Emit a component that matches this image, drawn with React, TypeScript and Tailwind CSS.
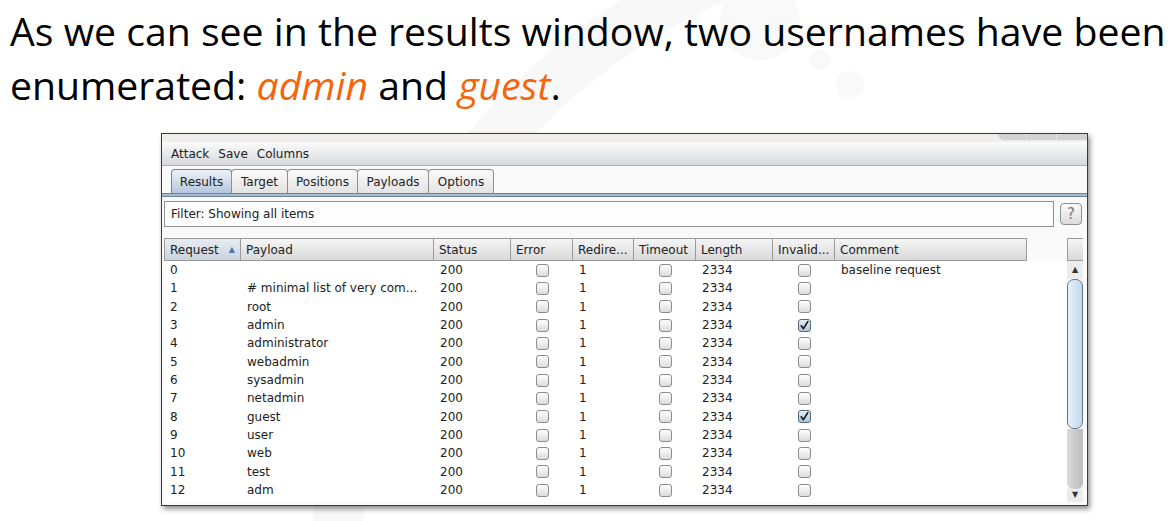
import React from "react";

type Col = { name: string; w: string; kind: "text" | "check" };

const cols: Col[] = [
  { name: "Request", w: "w-[77px]", kind: "text" },
  { name: "Payload", w: "w-[193px]", kind: "text" },
  { name: "Status", w: "w-[77px]", kind: "text" },
  { name: "Error", w: "w-[62px]", kind: "check" },
  { name: "Redire...", w: "w-[61px]", kind: "text" },
  { name: "Timeout", w: "w-[62px]", kind: "check" },
  { name: "Length", w: "w-[77px]", kind: "text" },
  { name: "Invalid...", w: "w-[62px]", kind: "check" },
  { name: "Comment", w: "w-[192px]", kind: "text" },
];

const payloads = [
  "",
  "# minimal list of very com...",
  "root",
  "admin",
  "administrator",
  "webadmin",
  "sysadmin",
  "netadmin",
  "guest",
  "user",
  "web",
  "test",
  "adm",
];

function Check({ on }: { on?: boolean }) {
  if (on) {
    return (
      <span className="relative inline-block w-[13px] h-[13px] rounded-[3px] border border-[#55677d] bg-linear-to-b from-[#e4ecf5] to-[#afc3d9]">
        <svg viewBox="0 0 13 13" className="absolute -left-[1px] -top-[1px] w-[13px] h-[13px]">
          <path d="M3.2 6.8 L5.4 9.6 L9.8 2.6" fill="none" stroke="#1a1a1a" strokeWidth="1.7" strokeLinecap="round" strokeLinejoin="round" />
        </svg>
      </span>
    );
  }
  return (
    <span className="inline-block w-[13px] h-[13px] rounded-[3px] border border-[#8c8c8c] bg-linear-to-b from-white to-[#dcdcdc]" />
  );
}

function Row({ i }: { i: number }) {
  const checked = i === 3 || i === 8;
  const values = [
    String(i),
    payloads[i],
    "200",
    "",
    "1",
    "",
    "2334",
    "",
    i === 0 ? "baseline request" : "",
  ];
  return (
    <div className="flex h-[18.33px] shrink-0">
      {cols.map((c, k) =>
        c.kind === "check" ? (
          <div key={k} className={`${c.w} shrink-0 flex items-center justify-center`}>
            <Check on={k === 7 && checked} />
          </div>
        ) : (
          <div key={k} className={`${c.w} shrink-0 flex items-center pl-[6px] whitespace-nowrap overflow-hidden`}>
            {values[k]}
          </div>
        )
      )}
    </div>
  );
}

function PartialRow() {
  return (
    <div className="flex h-[18.33px] shrink-0">
      {cols.map((c, k) =>
        c.kind === "check" ? (
          <div key={k} className={`${c.w} shrink-0 flex items-center justify-center`}>
            <Check />
          </div>
        ) : (
          <div key={k} className={`${c.w} shrink-0`} />
        )
      )}
    </div>
  );
}

const tabs = [
  { name: "Results", w: "w-[61px]", sel: true },
  { name: "Target", w: "w-[57px]", sel: false },
  { name: "Positions", w: "w-[71px]", sel: false },
  { name: "Payloads", w: "w-[72px]", sel: false },
  { name: "Options", w: "w-[66px]", sel: false },
];

export default function App() {
  return (
    <div className="relative w-[1173px] h-[521px] bg-white overflow-hidden">
      <svg className="absolute left-0 top-0 w-[1173px] h-[521px] pointer-events-none" viewBox="0 0 1173 521">
        <circle cx="974" cy="560" r="637" fill="none" stroke="#f8f8f8" strokeWidth="50" />
        <circle cx="760" cy="20" r="40" fill="#f9f9f9" />
        <circle cx="820" cy="60" r="10" fill="#f9f9f9" />
        <circle cx="850" cy="85" r="14" fill="#f9f9f9" />
      </svg>

      <div className="relative">
        <div
          className="pl-[10px] pt-[4px] text-[39.2px] leading-[54px] text-black whitespace-nowrap"
          style={{ fontFamily: '"Open Sans", sans-serif' }}
        >
          <div>As we can see in the results window, two usernames have been</div>
          <div>
            enumerated: <span className="italic text-[#f5650c]">admin</span> and{" "}
            <span className="italic text-[#f5650c]">guest</span>.
          </div>
        </div>

        <div
          className="ml-[161px] mt-[21px] w-[927px] h-[373px] border border-[#3a3a3a] shadow-[2px_3px_5px_rgba(0,0,0,0.45)] bg-[#fafafa] flex flex-col overflow-hidden text-[12px] text-[#222]"
          style={{ fontFamily: '"DejaVu Sans", sans-serif' }}
        >
          {/* top strip */}
          <div className="h-[8px] bg-[#efeeec] flex justify-end shrink-0">
            <div className="flex h-[6px] rounded-bl-[6px] overflow-hidden bg-[#d2d2d2]">
              <div className="w-[29px] border-r border-[#e4e4e4]" />
              <div className="w-[30px] border-r border-[#e4e4e4]" />
              <div className="w-[30px]" />
            </div>
          </div>
          {/* menu bar */}
          <div className="h-[24px] shrink-0 flex items-center gap-[9px] pl-[9px] bg-linear-to-b from-[#fbfbfb] to-[#d6d9dd] border-b border-[#aeb3ba]">
            <span>Attack</span>
            <span>Save</span>
            <span>Columns</span>
          </div>
          {/* tabs */}
          <div className="h-[27px] shrink-0 flex items-end pl-[9px] bg-[#fafafa]">
            {tabs.map((t) => (
              <div
                key={t.name}
                className={`${t.w} h-[24px] flex items-center justify-center border border-b-0 rounded-t-[4px] -mr-px ${
                  t.sel
                    ? "border-[#6d8298] bg-linear-to-b from-[#eef3f8] to-[#b4c7db]"
                    : "border-[#8e8e8e] bg-linear-to-b from-[#fbfbfb] to-[#e3e3e3]"
                }`}
              >
                {t.name}
              </div>
            ))}
          </div>
          <div className="h-[4px] shrink-0 border-y border-[#6f8399] bg-[#a8bace]" />
          {/* content */}
          <div className="flex-1 flex flex-col pl-[2px] pr-[4px] pt-[4px]">
            <div className="flex items-center gap-[6px]">
              <div className="w-[890px] h-[26px] border border-[#8f8f8f] bg-[#fdfdfd] flex items-center pl-[6px]">
                Filter: Showing all items
              </div>
              <div className="w-[22px] h-[22px] rounded-[4px] border border-[#8f8f8f] bg-linear-to-b from-[#fbfbfb] to-[#dcdcdc] flex items-center justify-center text-[15px] text-[#7a7a7a]">
                ?
              </div>
            </div>
            {/* table */}
            <div className="mt-[11px] h-[264px] flex overflow-hidden">
              <div className="w-[903px] flex flex-col bg-white">
                <div className="flex h-[23px] shrink-0">
                  {cols.map((c, k) => (
                    <div
                      key={c.name}
                      className={`${c.w} shrink-0 flex items-center pl-[5px] border-y border-r border-[#9a9a9a] ${
                        k === 0
                          ? "border-l bg-linear-to-b from-[#e7ecf2] to-[#c9d3de]"
                          : "bg-linear-to-b from-[#f5f5f5] to-[#d9d9d9]"
                      }`}
                    >
                      <span>{c.name}</span>
                      {k === 0 && <span className="ml-[10px] text-[8px] text-[#4f78ac]">▲</span>}
                    </div>
                  ))}
                  <div className="flex-1 bg-[#fafafa]" />
                </div>
                {payloads.map((_, i) => (
                  <Row key={i} i={i} />
                ))}
                <PartialRow />
              </div>
              {/* scrollbar */}
              <div className="w-[16px] flex flex-col shrink-0">
                <div className="h-[23px] shrink-0 border-y border-l border-[#9a9a9a] bg-linear-to-b from-[#f5f5f5] to-[#d9d9d9]" />
                <div className="h-[18px] shrink-0 bg-[#ececec] flex items-center justify-center text-[8px] text-[#333]">▲</div>
                <div className="h-[150px] shrink-0 rounded-[7px] border border-[#5f7891] bg-linear-to-r from-[#e8f0f8] to-[#c3d8ea]" />
                <div className="h-[60px] shrink-0 bg-linear-to-r from-[#dcdcdc] to-[#bcbcbc] rounded-b-[6px]" />
                <div className="h-[12px] shrink-0 bg-[#ececec] flex items-center justify-center text-[8px] text-[#333]">▼</div>
                <div className="flex-1 bg-[#ececec]" />
              </div>
            </div>
          </div>
        </div>
      </div>
    </div>
  );
}
